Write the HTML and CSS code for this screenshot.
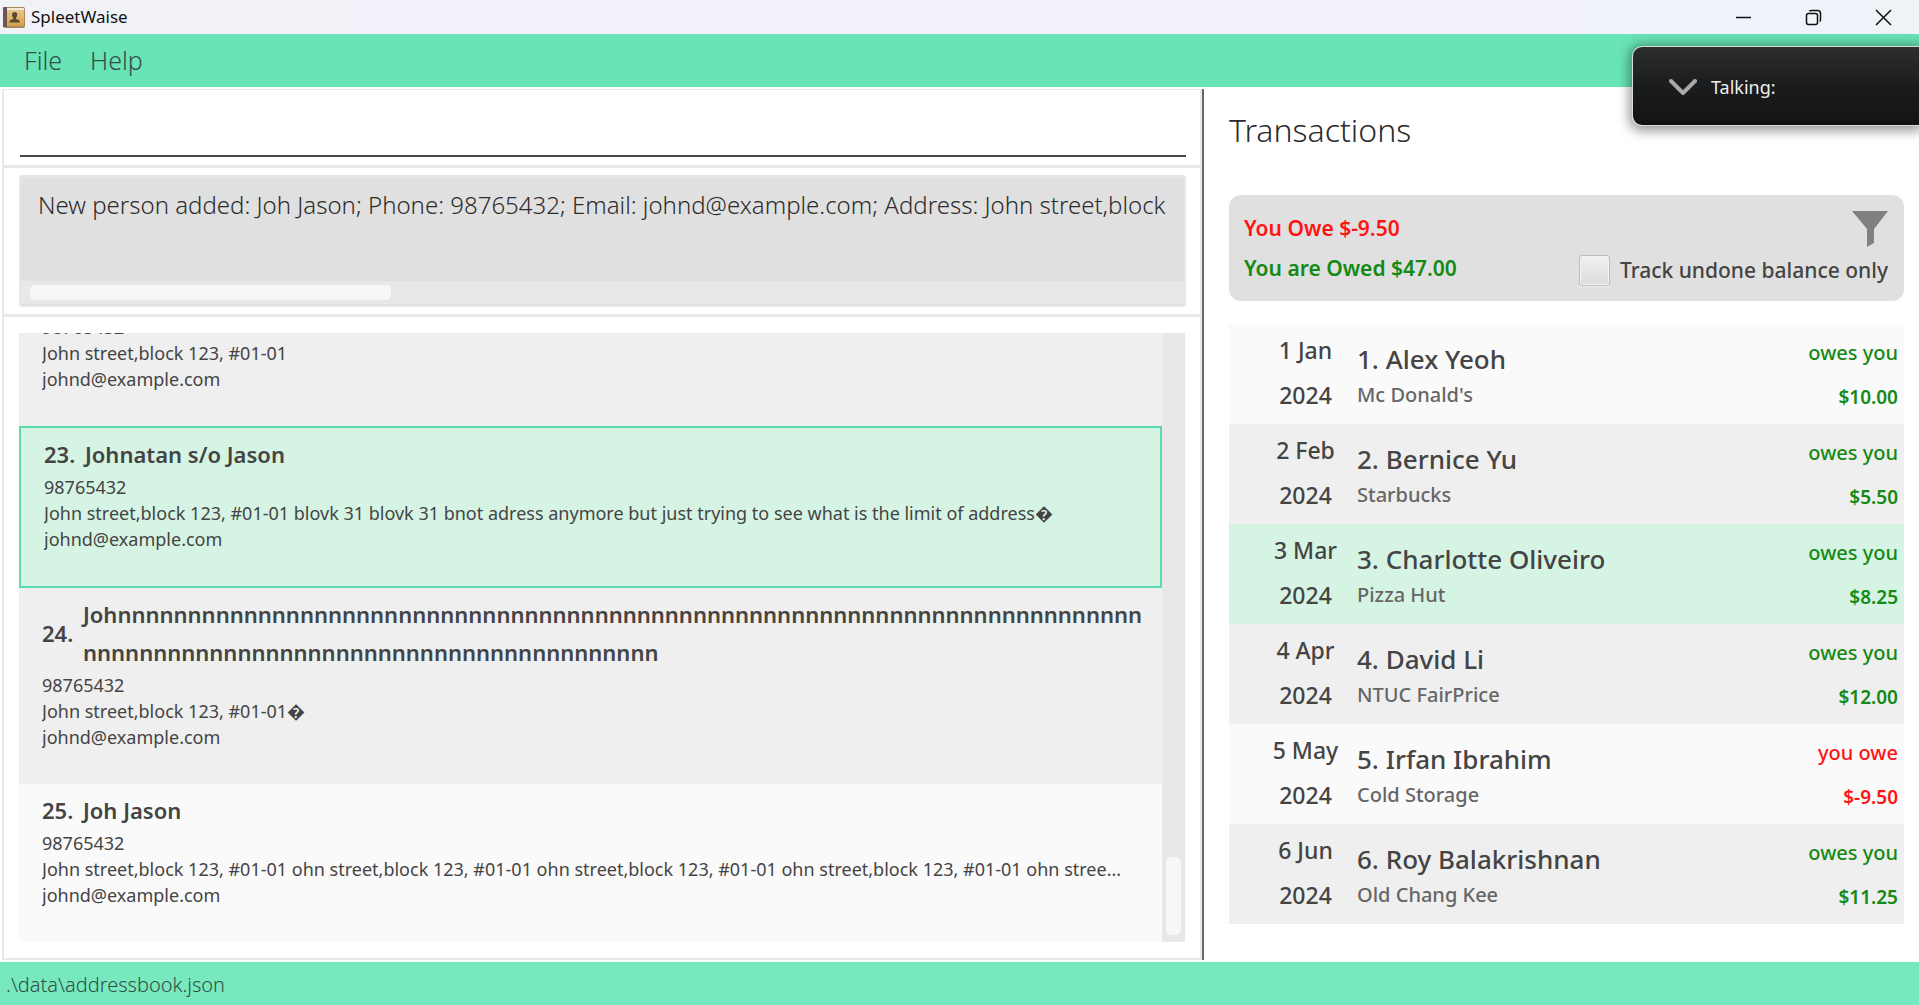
FILE: index.html
```html
<!DOCTYPE html>
<html lang="en">
<head>
<meta charset="utf-8">
<title>SpleetWaise</title>
<link rel="stylesheet" href="styles.css">
</head>
<body>
<header class="titlebar">
  <svg class="app-icon" width="23" height="22" viewBox="0 0 23 22" aria-hidden="true">
    <defs><linearGradient id="cover" x1="0" y1="0" x2="0" y2="1"><stop offset="0" stop-color="#e6c78c"/><stop offset="1" stop-color="#d9a04c"/></linearGradient></defs>
    <rect x="1" y="1" width="22" height="21" rx="2" fill="#a9885a"/>
    <rect x="5" y="2" width="17" height="2" fill="#f3e9d6"/>
    <rect x="5" y="4" width="17" height="16" fill="url(#cover)"/>
    <path d="M1 2a1 1 0 0 1 1-1h3v20H2a1 1 0 0 1-1-1z" fill="#6a5754"/>
    <path d="M10 8.500a2.600 2.600 0 0 1 5.200 0c0 1.600-.6 2.600-1.200 3.200v1.400c1.800.6 4 1 4 3.400H7.200c0-2.400 2.200-2.800 4-3.400v-1.400C10.600 11.100 10 10.100 10 8.500z" fill="#5d4a35"/>
  </svg>
  <span class="app-name">SpleetWaise</span>
  <div class="window-controls">
    <button type="button" aria-label="Minimise"><svg width="17" height="17" viewBox="0 0 17 17"><path d="M1 8.500h15"/></svg></button>
    <button type="button" aria-label="Restore"><svg width="17" height="17" viewBox="0 0 17 17"><rect x="1.500" y="4.500" width="11" height="11" rx="2"/><path d="M4.500 2.200Q5 1.500 6.500 1.500h6q3 0 3 3v6q0 1.500-.8 2"/></svg></button>
    <button type="button" aria-label="Close"><svg width="17" height="17" viewBox="0 0 17 17"><path d="M1 1l15 15M16 1L1 16"/></svg></button>
  </div>
</header>

<nav class="menubar">
  <button type="button">File</button>
  <button type="button">Help</button>
</nav>

<main class="split">
  <section class="left">
    <div class="pane pane-command">
      <input class="command" type="text" aria-label="Command">
    </div>
    <div class="pane pane-result">
      <div class="result">
        <textarea class="result-text" readonly wrap="off" rows="1" aria-label="Result">New person added: Joh Jason; Phone: 98765432; Email: johnd@example.com; Address: John street,block</textarea>
        <div class="hscroll"><div class="hthumb"></div></div>
      </div>
    </div>
    <div class="pane pane-list">
      <div class="persons">
        <ol class="person-list">
          <li class="person">
            <p>98765432</p>
            <p>John street,block 123, #01-01</p>
            <p>johnd@example.com</p>
          </li>
          <li class="person selected">
            <div class="person-name"><span class="num">23.</span><span class="name">Johnatan s/o Jason</span></div>
            <p>98765432</p>
            <p>John street,block 123, #01-01 blovk 31 blovk 31 bnot adress anymore but just trying to see what is the limit of address&#xFFFD;</p>
            <p>johnd@example.com</p>
          </li>
          <li class="person">
            <div class="person-name"><span class="num">24.</span><span class="name">Johnnnnnnnnnnnnnnnnnnnnnnnnnnnnnnnnnnnnnnnnnnnnnnnnnnnnnnnnnnnnnnnnnnnnnnnnnnnnnnnnnnnnnnnnnnnnnnnnnnnnnnnnnnnnnnnnnn</span></div>
            <p>98765432</p>
            <p>John street,block 123, #01-01&#xFFFD;</p>
            <p>johnd@example.com</p>
          </li>
          <li class="person light">
            <div class="person-name"><span class="num">25.</span><span class="name">Joh Jason</span></div>
            <p>98765432</p>
            <p>John street,block 123, #01-01 ohn street,block 123, #01-01 ohn street,block 123, #01-01 ohn street,block 123, #01-01 ohn stree...</p>
            <p>johnd@example.com</p>
          </li>
        </ol>
        <div class="vscroll"><div class="vthumb"></div></div>
      </div>
    </div>
  </section>

  <section class="right">
    <h1>Transactions</h1>
    <div class="summary">
      <div class="balances">
        <span class="owe">You Owe $-9.50</span>
        <span class="owed">You are Owed $47.00</span>
      </div>
      <div class="filters">
        <button class="filter" type="button" aria-label="Filter"><svg width="36" height="36" viewBox="0 0 36 36"><path d="M0 0h36L22 18v14l-7 4V18z" fill="#808080"/></svg></button>
        <label class="track"><input type="checkbox">Track undone balance only</label>
      </div>
    </div>
    <ul class="transactions">
      <li class="tx light">
        <div class="tx-date"><span>1 Jan</span><span>2024</span></div>
        <div class="tx-main"><span class="tx-name">1. Alex Yeoh</span><span class="tx-desc">Mc Donald's</span></div>
        <div class="tx-amount owed"><span>owes you</span><span class="sum">$10.00</span></div>
      </li>
      <li class="tx">
        <div class="tx-date"><span>2 Feb</span><span>2024</span></div>
        <div class="tx-main"><span class="tx-name">2. Bernice Yu</span><span class="tx-desc">Starbucks</span></div>
        <div class="tx-amount owed"><span>owes you</span><span class="sum">$5.50</span></div>
      </li>
      <li class="tx done">
        <div class="tx-date"><span>3 Mar</span><span>2024</span></div>
        <div class="tx-main"><span class="tx-name">3. Charlotte Oliveiro</span><span class="tx-desc">Pizza Hut</span></div>
        <div class="tx-amount owed"><span>owes you</span><span class="sum">$8.25</span></div>
      </li>
      <li class="tx">
        <div class="tx-date"><span>4 Apr</span><span>2024</span></div>
        <div class="tx-main"><span class="tx-name">4. David Li</span><span class="tx-desc">NTUC FairPrice</span></div>
        <div class="tx-amount owed"><span>owes you</span><span class="sum">$12.00</span></div>
      </li>
      <li class="tx light">
        <div class="tx-date"><span>5 May</span><span>2024</span></div>
        <div class="tx-main"><span class="tx-name">5. Irfan Ibrahim</span><span class="tx-desc">Cold Storage</span></div>
        <div class="tx-amount owe"><span>you owe</span><span class="sum">$-9.50</span></div>
      </li>
      <li class="tx">
        <div class="tx-date"><span>6 Jun</span><span>2024</span></div>
        <div class="tx-main"><span class="tx-name">6. Roy Balakrishnan</span><span class="tx-desc">Old Chang Kee</span></div>
        <div class="tx-amount owed"><span>owes you</span><span class="sum">$11.25</span></div>
      </li>
    </ul>
  </section>
</main>

<footer class="statusbar">.\data\addressbook.json</footer>

<aside class="talking">
  <svg width="28" height="17" viewBox="0 0 28 17" aria-hidden="true"><path d="M2 2l12 12L26 2" fill="none" stroke="#a9a9ab" stroke-width="4" stroke-linecap="round" stroke-linejoin="round"/></svg>
  <span>Talking:</span>
</aside>
</body>
</html>
```
FILE: styles.css
```css
* { box-sizing: border-box; }

body {
  margin: 0;
  height: 100vh;
  display: flex;
  flex-direction: column;
  overflow: hidden;
  background: #fff;
  color: #444;
  font-family: "Noto Sans", "Open Sans", sans-serif;
  font-size: 18px;
}

button {
  padding: 0;
  border: 0;
  background: none;
  color: inherit;
  font: inherit;
}

ol, ul, p, h1 { margin: 0; padding: 0; list-style: none; }

/* Window title bar */
.titlebar {
  flex: none;
  height: 34px;
  display: flex;
  align-items: center;
  gap: 6px;
  padding: 0 1px 0 2px;
  background: linear-gradient(90deg, #f1f2f8, #f1f2fa 82%, #eff3f8);
  color: #111;
}
.app-name { font-size: 17px; line-height: 24px; }
.window-controls {
  margin-left: auto;
  display: flex;
}
.window-controls button {
  width: 70px;
  height: 34px;
  display: flex;
  align-items: center;
  justify-content: center;
}
.window-controls svg { fill: none; stroke: #111; stroke-width: 1.5; }

.menubar {
  flex: none;
  height: 53px;
  display: flex;
  gap: 28px;
  padding: 0 0 2px 24px;
  background: #68e4b6;
  color: #305045;
  font-size: 25px;
  font-weight: 300;
}

/* Split view */
.split {
  flex: 1;
  min-height: 0;
  display: grid;
  grid-template: minmax(0, 1fr) / minmax(0, 1204fr) minmax(0, 715fr);
  padding: 2px 0;
}
.left {
  display: flex;
  flex-direction: column;
  padding-left: 2px;
  border-right: 2px solid #6a6a6a;
}
.pane {
  border: 2px solid #e8e8e8;
  border-top-width: 1px;
}
.pane-command { padding: 12px 14px 8px 16px; }
.command {
  display: block;
  width: 100%;
  height: 55px;
  padding: 0 14px;
  border: 0;
  border-bottom: 2px solid #484848;
  outline: 0;
  background: #fff;
  font: 300 24px "Noto Sans", sans-serif;
}

.pane-result { padding: 7px 14px 7px 15px; }
.result {
  border: 2px solid #e6e6e6;
  border-radius: 3px;
  background: #e0e0e0;
  display: flex;
  flex-direction: column;
  padding-bottom: 1px;
}
.result-text {
  display: block;
  width: 100%;
  height: 104px;
  padding: 10px 0 0 17px;
  border: 0;
  outline: 0;
  resize: none;
  overflow: hidden;
  background: transparent;
  color: #2c2c2c;
  font: 300 24px/36px "Noto Sans", sans-serif;
}
.hscroll {
  height: 23px;
  padding: 4px 9px;
  background: #e8e8e8;
}
.hthumb {
  width: 31.5%;
  height: 15px;
  border-radius: 5px;
  background: #f7f7f7;
}

.pane-list {
  flex: 1;
  min-height: 0;
  padding: 16px 15px 16px;
}
.persons {
  height: 100%;
  display: flex;
}
/* Scrolled to the end, so the oldest visible card is cut at the top */
.person-list {
  flex: 1;
  min-width: 0;
  display: flex;
  flex-direction: column;
  justify-content: flex-end;
  overflow: hidden;
}
.person {
  flex: none;
  padding: 7px 14px 34px 23px;
  background: #efefef;
}
.person.light, .tx.light { background: #fafafa; }
.person.selected {
  border: 2px solid #5cdcae;
  background: #d6f4e4;
}
.person-name {
  display: flex;
  align-items: center;
  margin-bottom: 1px;
  font-size: 22px;
  font-weight: 600;
  line-height: 38px;
}
.num { flex: none; width: 41px; }
.name { min-width: 0; overflow-wrap: anywhere; }
.person p {
  line-height: 26px;
  white-space: nowrap;
  overflow: hidden;
  text-overflow: ellipsis;
}

.vscroll {
  flex: none;
  width: 23px;
  display: flex;
  flex-direction: column;
  justify-content: flex-end;
  padding: 7px 4px;
  background: #e8e8e8;
}
.vthumb {
  height: 78px;
  border-radius: 5px;
  background: #f7f7f7;
}

/* Transactions */
.right { padding: 17px 15px 0 25px; }
.right h1 {
  margin-bottom: 41px;
  color: #2c2c2c;
  font-size: 32px;
  font-weight: 300;
  line-height: 48px;
}
.summary {
  display: flex;
  justify-content: space-between;
  padding: 13px 16px 11px 15px;
  border-radius: 12px;
  background: #e0e0e0;
  font-size: 21px;
  font-weight: 500;
  line-height: 40px;
}
.balances, .filters, .tx-date, .tx-main, .tx-amount {
  display: flex;
  flex-direction: column;
}
.balances { font-weight: 600; }
.filters { align-items: flex-end; }
.filter {
  height: 42px;
  display: flex;
  align-items: center;
}
.track {
  display: flex;
  align-items: center;
  gap: 10px;
}
.track input {
  appearance: none;
  width: 31px;
  height: 31px;
  margin: 0;
  border: 1px solid #bcbcbc;
  border-radius: 3px;
  background: linear-gradient(#f0f0f0, #dcdcdc);
  box-shadow: inset 0 0 0 1px #f4f4f4, 0 1px 0 #eee;
}
.owe { color: #ff1414; }
.owed { color: #138a13; }

.transactions { margin-top: 23px; }
.tx {
  height: 100px;
  display: flex;
  padding: 0 6px 0 25px;
  background: #efefef;
  font-size: 20px;
  font-weight: 500;
  line-height: 45px;
}
.tx.done { background: #d6f4e4; }
.tx-date {
  width: 103px;
  padding-top: 4px;
  align-items: center;
  font-size: 23px;
}
.tx-main {
  flex: 1;
  min-width: 0;
  padding-top: 17px;
}
.tx-name { font-size: 26px; line-height: 36px; }
.tx-desc { color: #666; line-height: 36px; }
.tx-amount { padding-top: 6px; align-items: flex-end; }
.sum { font-size: 19px; font-weight: 600; }

.statusbar {
  flex: none;
  height: 43px;
  padding-left: 6px;
  background: #78e8bf;
  color: #305045;
  font-size: 20px;
  font-weight: 300;
  line-height: 46px;
}

/* Call overlay, floating above the window */
.talking {
  position: absolute;
  top: 46px;
  right: 0;
  width: 287px;
  height: 80px;
  display: flex;
  align-items: center;
  gap: 14px;
  padding: 2px 0 0 36px;
  border: 1px solid #d8dedc;
  border-right: 0;
  border-radius: 10px 0 0 10px;
  background: linear-gradient(#2d2f2f, #1b1c1d 50%, #131313);
  box-shadow: 0 2px 12px 3px rgba(0, 0, 0, .4);
  color: #eee;
}
```
